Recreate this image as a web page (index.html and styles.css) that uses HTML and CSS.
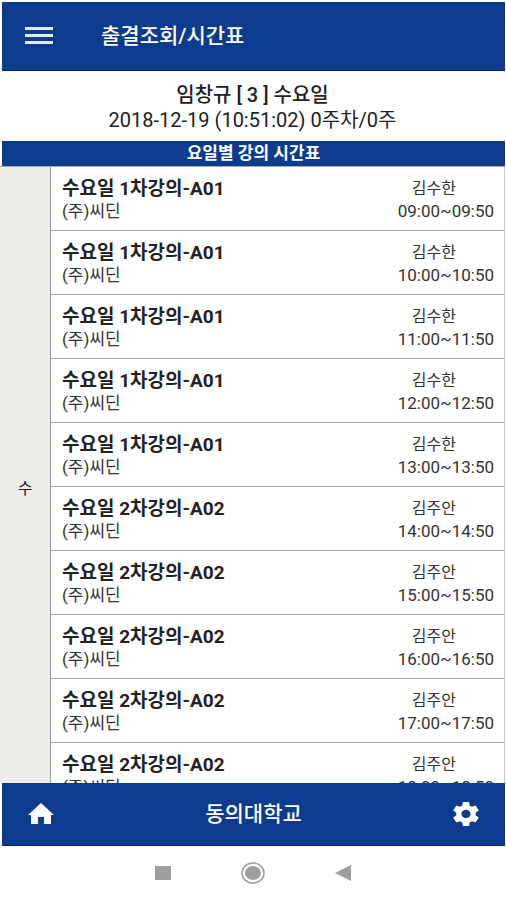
FILE: index.html
```html
<!DOCTYPE html>
<html lang="ko">

<head>
    <meta charset="UTF-8">
    <meta name="viewport" content="width=device-width, initial-scale=1.0">
    <title>출결조회/시간표</title>
    <link rel="stylesheet" href="styles.css">
</head>

<body>
    <div class="app">
        <header class="top-bar">
            <button type="button" aria-label="메뉴">
                <svg width="28" height="20" viewBox="0 0 28 20" fill="#e6e9f8">
                    <rect x="0" y="1" width="28" height="3" />
                    <rect x="0" y="8" width="28" height="3" />
                    <rect x="0" y="15" width="28" height="3" />
                </svg>
            </button>
            <h1>출결조회/시간표</h1>
        </header>

        <section class="summary">
            <p class="student">임창규 [ 3 ] 수요일</p>
            <p class="date">2018-12-19 (10:51:02) 0주차/0주</p>
        </section>

        <h2 class="banner">요일별 강의 시간표</h2>

        <main class="schedule">
            <table>
                <tbody id="lectures"></tbody>
            </table>
        </main>

        <footer class="bottom-bar">
            <button type="button" aria-label="홈">
                <svg width="26" height="22" viewBox="0 0 26 22" fill="#fff">
                    <path d="M13 0L0 12h3v9h7v-7h6v7h7v-9h3z" />
                </svg>
            </button>
            <strong>동의대학교</strong>
            <button type="button" aria-label="설정">
                <svg width="26" height="24" viewBox="2 2 20 20" preserveAspectRatio="none" fill="#fff">
                    <path d="M19.43 12.98c.04-.32.07-.64.07-.98s-.03-.66-.07-.98l2.11-1.65c.19-.15.24-.42.12-.64l-2-3.46c-.12-.22-.39-.3-.61-.22l-2.49 1c-.52-.4-1.08-.73-1.69-.98l-.38-2.65C14.46 2.18 14.25 2 14 2h-4c-.25 0-.46.18-.49.42l-.38 2.65c-.61.25-1.17.59-1.69.98l-2.49-1c-.23-.09-.49 0-.61.22l-2 3.46c-.13.22-.07.49.12.64l2.11 1.65c-.04.32-.07.65-.07.98s.03.66.07.98l-2.11 1.65c-.19.15-.24.42-.12.64l2 3.46c.12.22.39.3.61.22l2.49-1c.52.4 1.08.73 1.69.98l.38 2.65c.03.24.24.42.49.42h4c.25 0 .46-.18.49-.42l.38-2.65c.61-.25 1.17-.59 1.69-.98l2.49 1c.23.09.49 0 .61-.22l2-3.46c.12-.22.07-.49-.12-.64l-2.11-1.65zM12 15.5c-1.93 0-3.5-1.57-3.5-3.5s1.57-3.5 3.5-3.5 3.5 1.57 3.5 3.5-1.57 3.5-3.5 3.5z" />
                </svg>
            </button>
        </footer>
    </div>

    <nav class="system-nav">
        <button type="button" aria-label="최근 앱">
            <svg width="16" height="14" viewBox="0 0 16 14" fill="#9e9e9e">
                <rect width="16" height="14" />
            </svg>
        </button>
        <button type="button" aria-label="홈 화면">
            <svg width="24" height="22" viewBox="0 0 24 22">
                <ellipse cx="12" cy="11" rx="11" ry="10" fill="none" stroke="#9e9e9e" stroke-width="1.5" />
                <ellipse cx="12" cy="11" rx="8" ry="7" fill="#9e9e9e" />
            </svg>
        </button>
        <button type="button" aria-label="뒤로">
            <svg width="16" height="16" viewBox="0 0 16 16" fill="#9e9e9e">
                <path d="M16 0v16L0 8z" />
            </svg>
        </button>
    </nav>

    <script>
        const lectures = [
            { title: '수요일 1차강의-A01', teacher: '김수한', time: '09:00~09:50' },
            { title: '수요일 1차강의-A01', teacher: '김수한', time: '10:00~10:50' },
            { title: '수요일 1차강의-A01', teacher: '김수한', time: '11:00~11:50' },
            { title: '수요일 1차강의-A01', teacher: '김수한', time: '12:00~12:50' },
            { title: '수요일 1차강의-A01', teacher: '김수한', time: '13:00~13:50' },
            { title: '수요일 2차강의-A02', teacher: '김주안', time: '14:00~14:50' },
            { title: '수요일 2차강의-A02', teacher: '김주안', time: '15:00~15:50' },
            { title: '수요일 2차강의-A02', teacher: '김주안', time: '16:00~16:50' },
            { title: '수요일 2차강의-A02', teacher: '김주안', time: '17:00~17:50' },
            { title: '수요일 2차강의-A02', teacher: '김주안', time: '18:00~18:50' }
        ];

        // the day cell spans every lecture of that day
        document.getElementById('lectures').innerHTML = lectures.map((item, i) => `
            <tr>
                ${i === 0 ? `<th class="day" scope="rowgroup" rowspan="${lectures.length}">수</th>` : ''}
                <td class="lecture">
                    <p class="title">${item.title}</p>
                    <p class="place">(주)씨딘</p>
                </td>
                <td class="info">
                    <p class="teacher">${item.teacher}</p>
                    <p class="time">${item.time}</p>
                </td>
            </tr>`).join('');
    </script>
</body>

</html>
```
FILE: styles.css
```css
* {
    box-sizing: border-box;
}

body {
    display: flex;
    flex-direction: column;
    height: 100vh;
    margin: 0;
    font-family: Roboto, "Noto Sans CJK KR", sans-serif;
    color: #222;
    background-color: #fff;
}

h1,
h2,
p {
    margin: 0;
}

button {
    display: flex;
    padding: 0;
    border: none;
    background: transparent;
    cursor: pointer;
}

.app {
    display: flex;
    flex: 1;
    flex-direction: column;
    min-height: 0;
    padding: 2px 1px 0 0;
}

.top-bar,
.banner,
.bottom-bar {
    margin-left: 2px;
    color: #fff;
    background-color: #0d3b8e;
}

.top-bar {
    display: flex;
    align-items: center;
    gap: 48px;
    height: 69px;
    padding: 0 23px;
    border-bottom: 1px solid #0a1c85;
}

.top-bar h1,
.bottom-bar strong {
    font-size: 21px;
    line-height: 24px;
    font-weight: 500;
}

.summary {
    padding: 12px 0 9px;
    text-align: center;
}

.student {
    font-size: 20px;
    line-height: 25px;
    font-weight: 500;
}

.date {
    font-size: 20px;
    line-height: 24px;
}

.banner {
    font-size: 17px;
    line-height: 25px;
    font-weight: 700;
    text-align: center;
}

.schedule {
    flex: 1;
    min-height: 0;
    overflow-y: auto;
    scrollbar-width: none;
    border-top: 1px solid #aaa;
}

.schedule table {
    width: 100%;
    border-spacing: 0;
}

.schedule td {
    border-bottom: 1px solid #a5a5a5;
    vertical-align: top;
}

.day {
    width: 50px;
    padding: 0;
    font-size: 16px;
    font-weight: 400;
    background-color: #efedea;
}

.lecture {
    padding: 10px 11px 9px;
    border-left: 1px solid #999;
}

.title {
    font-size: 19px;
    line-height: 24px;
    font-weight: 700;
}

.place,
.time {
    font-size: 17px;
    line-height: 20px;
    color: #333;
}

.info {
    width: 130px;
    padding: 10px 10px 9px 0;
    border-right: 1px solid #ccc;
    text-align: right;
}

.teacher {
    padding-right: 38px;
    font-size: 16px;
    line-height: 24px;
    color: #333;
}

.bottom-bar {
    display: flex;
    align-items: center;
    justify-content: space-between;
    height: 63px;
    padding: 0 26px;
    border-bottom: 1px solid #0a1c85;
}

.system-nav {
    display: flex;
    align-items: center;
    justify-content: center;
    gap: 70px;
    height: 54px;
}
```
